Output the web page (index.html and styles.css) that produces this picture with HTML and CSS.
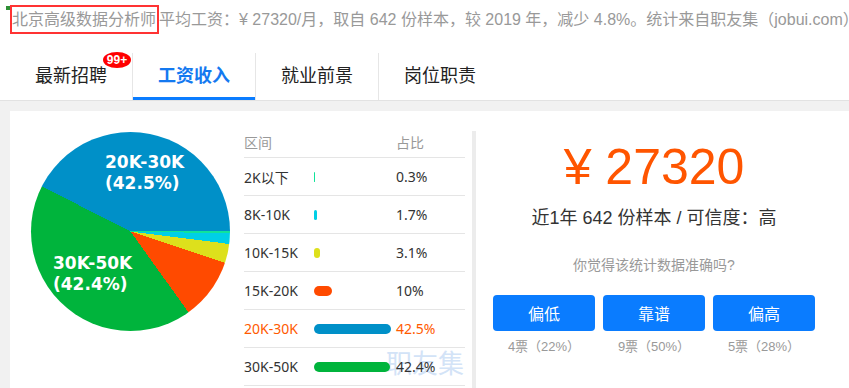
FILE: index.html
```html
<!DOCTYPE html>
<html lang="zh-CN">
<head>
  <meta charset="UTF-8">
  <title>北京高级数据分析师工资收入</title>
  <link rel="stylesheet" href="styles.css">
</head>
<body>
  <div class="summary">
    <i class="mark"></i>
    <span class="hl">北京高级数据分析师</span>平均工资：¥ 27320/月，取自 642 份样本，较 2019 年，减少 4.8%。统计来自职友集（jobui.com）
  </div>

  <ul class="tabs">
    <li class="tab">最新招聘<span class="badge">99+</span></li>
    <li class="tab active">工资收入</li>
    <li class="tab">就业前景</li>
    <li class="tab">岗位职责</li>
  </ul>

  <div class="main">
    <div class="card">
      <div class="chart">
        <div class="pie">
          <div class="pie-label lbl-a">20K-30K<br>(42.5%)</div>
          <div class="pie-label lbl-b">30K-50K<br>(42.4%)</div>
        </div>
      </div>

      <div class="dist">
        <div class="row head"><span>区间</span><span></span><span>占比</span></div>
        <div class="row"><span>2K以下</span><span><i class="bar c-mint" style="width:0.54px"></i></span><span>0.3%</span></div>
        <div class="row"><span>8K-10K</span><span><i class="bar c-cyan" style="width:3px"></i></span><span>1.7%</span></div>
        <div class="row"><span>10K-15K</span><span><i class="bar c-yellow" style="width:5.6px"></i></span><span>3.1%</span></div>
        <div class="row"><span>15K-20K</span><span><i class="bar c-orange" style="width:18px"></i></span><span>10%</span></div>
        <div class="row cur"><span>20K-30K</span><span><i class="bar c-blue" style="width:76.5px"></i></span><span>42.5%</span></div>
        <div class="row"><span>30K-50K</span><span><i class="bar c-green" style="width:76.3px"></i></span><span>42.4%</span></div>
      </div>

      <div class="watermark">职友集</div>

      <div class="overview">
        <div class="price">¥ 27320</div>
        <div class="meta">近1年 642 份样本 / 可信度：高</div>
        <div class="ask">你觉得该统计数据准确吗?</div>
        <div class="votes">
          <div class="vote"><button class="btn">偏低</button><span>4票（22%）</span></div>
          <div class="vote"><button class="btn">靠谱</button><span>9票（50%）</span></div>
          <div class="vote"><button class="btn">偏高</button><span>5票（28%）</span></div>
        </div>
      </div>
    </div>
  </div>
</body>
</html>
```

FILE: styles.css
```css
body {
  margin: 0;
  background: #fff;
  font-family: "Liberation Sans", "Noto Sans CJK SC", sans-serif;
  color: #333;
  overflow: hidden;
}
.summary {
  position: relative;
  height: 53px;
  padding: 5px 0 0 10px;
  box-sizing: border-box;
  font-size: 16px;
  line-height: 29px;
  color: #999;
  white-space: nowrap;
}
.mark {
  position: absolute;
  top: 6px;
  left: 6px;
  width: 4px;
  height: 4px;
  background: #2f8f35;
}
.hl {
  display: inline-block;
  border: 2px solid #f33;
  line-height: 25px;
  vertical-align: top;
  padding-right: 1px;
}
.tabs {
  display: flex;
  margin: 0;
  padding: 0 0 0 10px;
  list-style: none;
  height: 47px;
}
.tab {
  position: relative;
  width: 122px;
  text-align: center;
  font-size: 18px;
  line-height: 47px;
  color: #222;
}
.tab + .tab {
  border-left: 1px solid #e6e6e6;
}
.tab.active {
  color: #1479f0;
  font-weight: bold;
  box-shadow: inset 0 -3px 0 #0a7cff;
}
.badge {
  position: absolute;
  top: -1px;
  left: 93px;
  width: 28px;
  height: 16px;
  border-radius: 50%;
  background: #f00;
  color: #fff;
  font-size: 12px;
  font-weight: bold;
  line-height: 16px;
  text-align: center;
}
.main {
  border-top: 1px solid #e2e2e2;
  background: #f1f1f1;
  padding: 10px 0 0 10px;
}
.card {
  position: relative;
  display: flex;
  align-items: flex-start;
  background: #fff;
  height: 320px;
}
.chart {
  width: 234px;
  padding: 21px 0 0 21px;
  box-sizing: border-box;
}
.pie {
  position: relative;
  width: 199px;
  height: 199px;
  border-radius: 50%;
  background: conic-gradient(from 90deg,
    #10e39a 0 0.3%,
    #00cfe6 0.3% 2%,
    #dde01c 2% 5.1%,
    #ff4a00 5.1% 15.1%,
    #00b43c 15.1% 57.5%,
    #0090c8 57.5% 100%);
}
.pie-label {
  position: absolute;
  font-family: "DejaVu Sans", sans-serif;
  font-weight: bold;
  font-size: 17px;
  line-height: 21px;
  color: #fff;
}
.lbl-a { left: 74px; top: 20px; }
.lbl-b { left: 22px; top: 121px; }

.dist {
  position: relative;
  z-index: 1;
  width: 221px;
  margin-top: 16px;
  font-family: "Noto Sans", "Noto Sans CJK SC", sans-serif;
  font-size: 14px;
}
.row {
  display: grid;
  grid-template-columns: 70px 82px 1fr;
  align-items: center;
  height: 38px;
  box-sizing: border-box;
  border-bottom: 1px solid #e5e5e5;
}
.row.head {
  height: 31px;
  color: #999;
}
.row.cur {
  color: #ff5a00;
}
.bar {
  display: block;
  min-width: 1px;
  height: 10px;
  border-radius: 5px;
}
.c-mint { background: #10e39a; }
.c-cyan { background: #00cfe6; }
.c-yellow { background: #dde01c; }
.c-orange { background: #ff4a00; }
.c-blue { background: #0090c8; }
.c-green { background: #00b43c; }

.watermark {
  position: absolute;
  left: 376px;
  top: 236px;
  font-family: "Noto Sans CJK SC", sans-serif;
  font-size: 26px;
  line-height: 30px;
  color: #d3e3f7;
}
.overview {
  width: 356px;
  margin: 20px 0 0 7px;
  padding-top: 6px;
  border-left: 4px solid #ececec;
  height: 300px;
  text-align: center;
}
.price {
  font-size: 50px;
  line-height: 60px;
  color: #ff5500;
}
.meta {
  margin-top: 9px;
  font-size: 18px;
  line-height: 24px;
  color: #333;
}
.ask {
  margin-top: 25px;
  font-size: 14px;
  line-height: 20px;
  color: #999;
}
.votes {
  display: flex;
  justify-content: center;
  gap: 8px;
  margin-top: 20px;
}
.vote {
  display: flex;
  flex-direction: column;
  align-items: center;
  width: 102px;
  font-size: 13px;
  line-height: 18px;
  color: #999;
}
.btn {
  width: 102px;
  height: 36px;
  margin-bottom: 7px;
  border: none;
  border-radius: 4px;
  background: #0a7cff;
  color: #fff;
  font-family: "Noto Sans CJK SC", sans-serif;
  font-size: 16px;
}
```
